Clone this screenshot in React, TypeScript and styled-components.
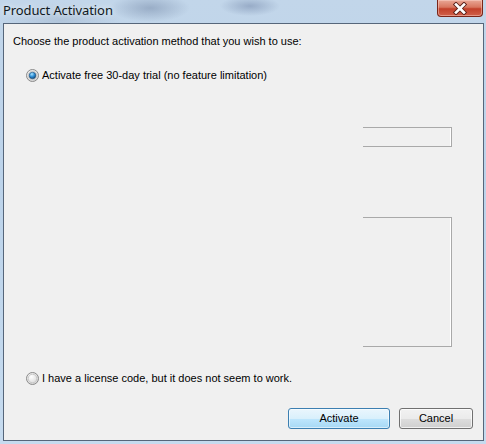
import React from "react";
import styled, { createGlobalStyle } from "styled-components";

const Global = createGlobalStyle`
  html, body { margin: 0; padding: 0; }
  body { width: 486px; height: 444px; overflow: hidden; background: #c9dbee; }
`;

const Window = styled.div`
  width: 486px;
  height: 444px;
  box-sizing: border-box;
  display: flex;
  flex-direction: column;
  padding: 0 2px 3px 3px;
  background:
    radial-gradient(ellipse 40px 14px at 150px 8px, rgba(120,140,170,0.55), transparent),
    radial-gradient(ellipse 30px 10px at 250px 6px, rgba(110,130,165,0.5), transparent),
    radial-gradient(ellipse 60px 18px at 60px 20px, rgba(150,170,195,0.4), transparent),
    linear-gradient(180deg, #c2d6ea 0%, #bcd3ea 40%, #c6dbef 100%);
`;

const TitleBar = styled.div`
  height: 23px;
  display: flex;
  align-items: flex-start;
  justify-content: space-between;
  flex: none;
`;

const Title = styled.div`
  font-family: "Noto Sans", "Open Sans", sans-serif;
  font-size: 13px;
  letter-spacing: -0.1px;
  line-height: 18px;
  color: #101820;
  padding-top: 1px;
  text-shadow: 0 0 6px rgba(255,255,255,0.9);
`;

const CloseButton = styled.div`
  width: 46px;
  height: 17px;
  box-sizing: border-box;
  margin-right: 1px;
  border: 1px solid #7a2518;
  border-top: none;
  border-radius: 0 0 4px 4px;
  background: linear-gradient(180deg, #e9a796 0%, #d8765f 45%, #c2402a 55%, #d0604a 100%);
  box-shadow: inset 0 0 0 1px rgba(255,220,210,0.45);
  display: flex;
  align-items: center;
  justify-content: center;
`;

const Client = styled.div`
  flex: 1;
  box-sizing: border-box;
  border: 1px solid #56667a;
  background: #f0f0f0;
  display: flex;
  flex-direction: column;
  font-family: "Liberation Sans", Arial, sans-serif;
  font-size: 11px;
  color: #000;
`;

const Heading = styled.div`
  padding: 10px 0 0 9px;
  line-height: 15px;
`;

const RadioRow = styled.label<{ $top: number }>`
  display: flex;
  align-items: center;
  gap: 3px;
  margin-top: ${(p) => p.$top}px;
  padding-left: 22px;
  height: 15px;
  line-height: 15px;
`;

const RightColumn = styled.div`
  display: flex;
  flex-direction: column;
  align-items: flex-end;
  padding-right: 31px;
`;

const TextBox = styled.div`
  width: 89px;
  height: 20px;
  box-sizing: border-box;
  margin-top: 44px;
  border: 1px solid #a9a9a9;
  border-left: none;
  box-shadow: inset -1px 0 0 #ffffff;
`;

const FrameBox = styled.div`
  width: 89px;
  height: 130px;
  box-sizing: border-box;
  margin-top: 70px;
  border: 1px solid #a9a9a9;
  border-left: none;
  box-shadow: inset -1px 0 0 #ffffff;
`;

const ButtonRow = styled.div`
  display: flex;
  justify-content: flex-end;
  gap: 9px;
  padding-right: 10px;
  margin-top: 22px;
`;

const Button = styled.div<{ $primary?: boolean; $w: number }>`
  width: ${(p) => p.$w}px;
  height: 21px;
  box-sizing: border-box;
  border-radius: 3px;
  display: flex;
  align-items: center;
  justify-content: center;
  border: 1px solid ${(p) => (p.$primary ? "#3c7fb1" : "#707070")};
  background: ${(p) =>
    p.$primary
      ? "linear-gradient(180deg, #eaf6fd 0%, #d9f0fc 50%, #bee6fd 51%, #a7d9f5 100%)"
      : "linear-gradient(180deg, #f2f2f2 0%, #ebebeb 50%, #dddddd 51%, #cfcfcf 100%)"};
  box-shadow: inset 0 0 0 1px ${(p) => (p.$primary ? "rgba(255,255,255,0.55)" : "rgba(255,255,255,0.7)")};
  padding-bottom: 1px;
`;

const RadioIcon = ({ checked }: { checked?: boolean }) => (
  <svg width="13" height="13" viewBox="0 0 13 13">
    <defs>
      <radialGradient id={checked ? "rg1" : "rg0"} cx="0.4" cy="0.35" r="0.7">
        <stop offset="0" stopColor="#ffffff" />
        <stop offset="1" stopColor="#d4d4d4" />
      </radialGradient>
      <radialGradient id="dot" cx="0.4" cy="0.3" r="0.75">
        <stop offset="0" stopColor="#a9e4ff" />
        <stop offset="0.5" stopColor="#2f8fd6" />
        <stop offset="1" stopColor="#0b3f6f" />
      </radialGradient>
    </defs>
    <circle cx="6.5" cy="6.5" r="6" fill={`url(#${checked ? "rg1" : "rg0"})`} stroke="#8a8a8a" strokeWidth="1" />
    <circle cx="6.5" cy="6.5" r="4.3" fill="none" stroke="#c8c8c8" strokeWidth="1" />
    {checked && <circle cx="6.5" cy="6.5" r="3.3" fill="url(#dot)" stroke="#1f4e79" strokeWidth="0.6" />}
  </svg>
);

const CloseX = () => (
  <svg width="16" height="13" viewBox="0 0 16 13">
    <path d="M4 2.5 L12 10.5 M12 2.5 L4 10.5" stroke="#5a2018" strokeWidth="4.4" strokeLinecap="square" />
    <path d="M4 2.5 L12 10.5 M12 2.5 L4 10.5" stroke="#ffffff" strokeWidth="2.6" strokeLinecap="square" />
  </svg>
);

export default function App() {
  return (
    <>
      <Global />
      <Window>
        <TitleBar>
          <Title>Product Activation</Title>
          <CloseButton>
            <CloseX />
          </CloseButton>
        </TitleBar>
        <Client>
          <Heading>Choose the product activation method that you wish to use:</Heading>
          <RadioRow $top={19}>
            <RadioIcon checked />
            <span>Activate free 30-day trial (no feature limitation)</span>
          </RadioRow>
          <RightColumn>
            <TextBox />
            <FrameBox />
          </RightColumn>
          <RadioRow $top={24}>
            <RadioIcon />
            <span>I have a license code, but it does not seem to work.</span>
          </RadioRow>
          <ButtonRow>
            <Button $primary $w={102}>Activate</Button>
            <Button $w={74}>Cancel</Button>
          </ButtonRow>
        </Client>
      </Window>
    </>
  );
}
